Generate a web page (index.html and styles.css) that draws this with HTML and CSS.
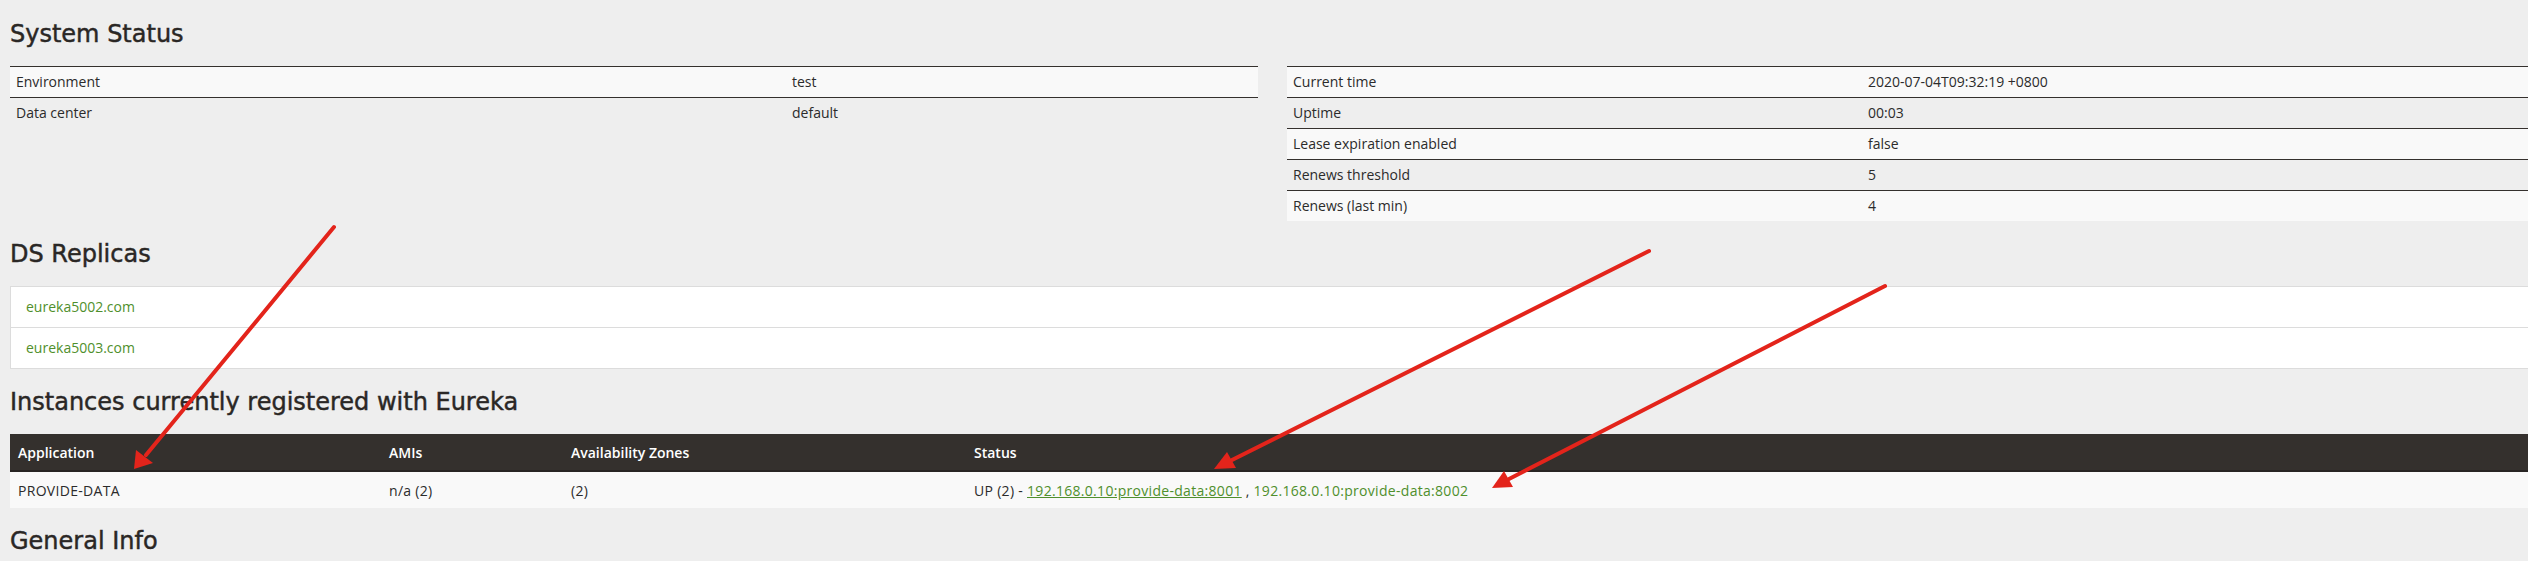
FILE: index.html
```html
<!DOCTYPE html>
<html>
<head>
<meta charset="utf-8">
<link rel="stylesheet" href="styles.css">
</head>
<body>
<div class="page">
  <h2 class="title first">System Status</h2>
  <div class="status-grid">
    <table class="kv kv-left">
      <tr class="odd"><td class="k">Environment</td><td>test</td></tr>
      <tr><td class="k">Data center</td><td>default</td></tr>
    </table>
    <table class="kv kv-right">
      <tr class="odd"><td class="k">Current time</td><td>2020-07-04T09:32:19 +0800</td></tr>
      <tr><td class="k">Uptime</td><td>00:03</td></tr>
      <tr class="odd"><td class="k">Lease expiration enabled</td><td>false</td></tr>
      <tr><td class="k">Renews threshold</td><td>5</td></tr>
      <tr class="odd"><td class="k">Renews (last min)</td><td>4</td></tr>
    </table>
  </div>

  <h2 class="title">DS Replicas</h2>
  <ul class="replicas">
    <li><a href="#">eureka5002.com</a></li>
    <li><a href="#">eureka5003.com</a></li>
  </ul>

  <h2 class="title">Instances currently registered with Eureka</h2>
  <table class="instances">
    <thead>
      <tr><th class="c-app">Application</th><th class="c-ami">AMIs</th><th class="c-az">Availability Zones</th><th>Status</th></tr>
    </thead>
    <tbody>
      <tr><td>PROVIDE-DATA</td><td>n/a (2)</td><td>(2)</td><td>UP (2) - <a href="#" class="hover">192.168.0.10:provide-data:8001</a> , <a href="#">192.168.0.10:provide-data:8002</a></td></tr>
    </tbody>
  </table>

  <h2 class="title">General Info</h2>
</div>

<svg class="annot" width="2528" height="561" viewBox="0 0 2528 561" xmlns="http://www.w3.org/2000/svg">
  <g stroke="#e3241b" stroke-width="4" stroke-linecap="round" fill="none">
    <line x1="334" y1="227" x2="146" y2="455"/>
    <line x1="1649" y1="251" x2="1232" y2="460"/>
    <line x1="1885" y1="286" x2="1509" y2="479"/>
  </g>
  <g fill="#e3241b">
    <polygon points="134,469 136,450 153,463"/>
    <polygon points="1214,469 1227,452 1236,468"/>
    <polygon points="1492,488 1504,471 1513,487"/>
  </g>
</svg>
</body>
</html>
```
FILE: styles.css
```css
html, body {
  margin: 0;
  padding: 0;
  background: #eeeeee;
}
body {
  font-family: "Open Sans", "Liberation Sans", sans-serif;
  font-size: 14px;
  color: #2b2b2b;
  position: relative;
  width: 2528px;
  height: 561px;
  overflow: hidden;
}
.page {
  padding-left: 10px;
  width: 2540px;
}
.title {
  font-family: "DejaVu Sans", sans-serif;
  font-weight: normal;
  font-size: 24px;
  line-height: 26px;
  color: #2a2725;
  -webkit-text-stroke: 0.45px #2a2725;
  margin: 20px 0 19px;
}
.title.first {
  margin-top: 21px;
}
.status-grid {
  display: grid;
  grid-template-columns: 1248px 1fr;
  column-gap: 29px;
  align-items: start;
}
table {
  border-collapse: collapse;
  width: 100%;
}
.kv td {
  border-top: 1px solid #34302d;
  padding: 0 6px;
  height: 30px;
  line-height: 16px;
  vertical-align: middle;
}
.kv tr.odd td {
  background: #f9f9f9;
}
.kv-left td.k { width: 764px; }
.kv-right td.k { width: 563px; }

.replicas {
  list-style: none;
  margin: 0;
  padding: 0;
  background: #fff;
  border: 1px solid #dcdcdc;
}
.replicas li {
  height: 40px;
  line-height: 40px;
  padding-left: 15px;
}
.replicas li + li {
  border-top: 1px solid #dcdcdc;
}
a {
  color: #4f8f2c;
  text-decoration: none;
}
a.hover {
  text-decoration: underline;
}

.instances th {
  background: #34302d;
  color: #fff;
  font-weight: 600;
  text-align: left;
  height: 36px;
  padding: 0 8px;
  border-bottom: 2px solid #282523;
  vertical-align: middle;
}
.instances td {
  background: #f9f9f9;
  height: 36px;
  padding: 0 8px;
  vertical-align: middle;
  letter-spacing: 0.3px;
}
.instances .c-app { width: 355px; }
.instances .c-ami { width: 166px; }
.instances .c-az { width: 387px; }

.annot {
  position: absolute;
  left: 0;
  top: 0;
  pointer-events: none;
}
```
